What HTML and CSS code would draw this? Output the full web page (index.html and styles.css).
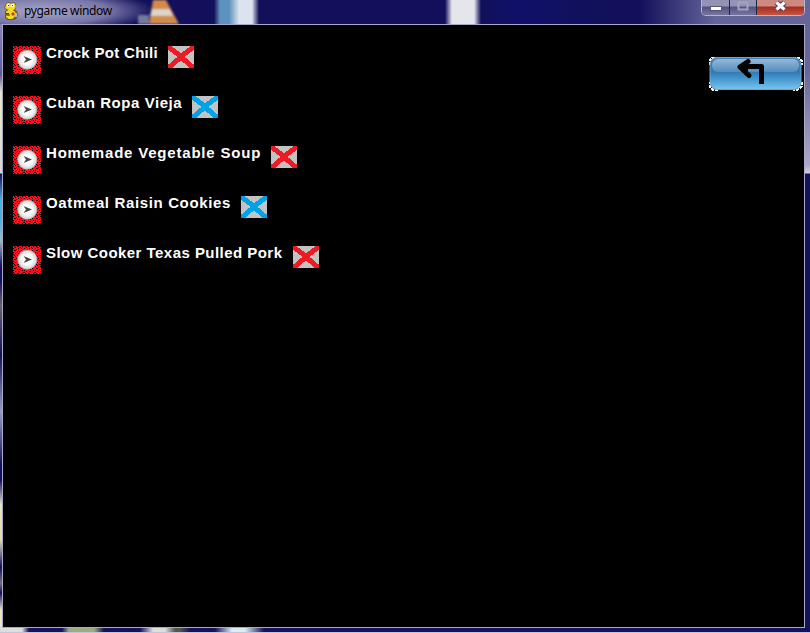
FILE: index.html
```
<!DOCTYPE html>
<html lang="en">
<head>
<meta charset="utf-8">
<title>pygame window</title>
<link rel="stylesheet" href="styles.css">
</head>
<body>
<svg class="defs" width="0" height="0" aria-hidden="true">
  <defs>
    <pattern id="speckle" width="11" height="9" patternUnits="userSpaceOnUse">
      <rect width="11" height="9" fill="#fa0d18"/>
      <path fill="#160003" d="M1 0h1v1h-1zM4 0h2v1h-2zM9 0h1v1h-1zM2 1h1v1h-1zM7 1h1v1h-1zM0 2h1v1h-1zM5 2h1v1h-1zM8 2h1v1h-1zM3 3h1v1h-1zM1 4h2v1h-2zM8 4h1v1h-1zM4 5h1v1h-1zM6 5h1v1h-1zM0 6h1v1h-1zM9 6h1v1h-1zM2 7h1v1h-1zM5 7h2v1h-2zM0 8h1v1h-1zM10 8h1v1h-1z"/>
    </pattern>
    <radialGradient id="disc"><stop offset=".5" stop-color="#fff"/><stop offset="1" stop-color="#ccd0cf"/></radialGradient>
    <symbol id="play" viewBox="0 0 28 28">
      <rect width="28" height="28" fill="url(#speckle)" shape-rendering="crispEdges"/>
      <circle cx="14.300" cy="13.600" r="9.700" fill="url(#disc)" stroke="#aaa" stroke-width=".6"/>
      <path d="M10.500 10l8.500 3.500-8.500 3.500 2.500-3.500z" fill="#484848"/>
    </symbol>
    <symbol id="cross" viewBox="0 0 26 22">
      <rect width="26" height="22" fill="#c3c3c3"/>
      <path d="M1 1.500l7.500 5.500 5 4.500 10.500 9M25 1.500L17.500 7 9.500 14 2 20.500" fill="none" stroke="currentColor" stroke-width="5" stroke-linecap="square" shape-rendering="crispEdges"/>
    </symbol>
  </defs>
</svg>
<div class="window">
  <header class="titlebar">
    <svg class="logo" width="16" height="18" viewBox="0 0 16 18">
      <path d="M3 1l3-1 2 1 3-1 2 2v4l-1 2 2 1 1 3-1 4-3 2H5l-3-2V9l2-1-3-2z" fill="#6b5a1c"/>
      <path d="M3.500 1.500L6 .8l2 1 3-1L12.500 3v3L10 8.500l2.500 1.500-1 5-2 2H5.500L3 15V13.500l3 .5 1.500-1.500L3 12V9.500l2.500-1.500L2 6z" fill="#f5dc22"/>
      <path d="M4 2h2v3H4zM8 2h3v3H8z" fill="#fff"/>
      <path d="M5 3h1v1H5zM9 3h1v1H9zM3 11h3v1H3z" fill="#444"/>
      <path d="M10 10l2 2-2 2-2-2z" fill="#c33a40"/><path d="M12 11h2v4h-2z" fill="#bbb"/>
    </svg>
    <h1 class="title">pygame window</h1>
    <svg class="cone" width="48" height="24" viewBox="0 0 48 24"><path d="M15 0h13l13 24H11z" fill="#d28b4c"/><path d="M14 9h18l3 7H12z" fill="#ddd3cc"/><path d="M0 15h11v9H0z" fill="#737b9c"/></svg>
    <div class="controls">
      <span class="control minimize"><svg width="29" height="16" viewBox="0 0 29 16"><rect x="8.500" y="6.500" width="11" height="4" fill="#fff" stroke="#555575"/></svg></span>
      <span class="control maximize"><svg width="26" height="16" viewBox="0 0 26 16"><path d="M8.500 2.500h9v7h-9z" fill="none" stroke="#a5a5bf" stroke-width="2"/></svg></span>
      <span class="control close"><svg width="47" height="16" viewBox="0 0 47 16"><path d="M19.500 2.500l8 7m0-7l-8 7" stroke="#554557" stroke-width="5.500"/><path d="M19.500 2.500l8 7m0-7l-8 7" stroke="#fff" stroke-width="3"/></svg></span>
    </div>
  </header>
  <main class="client">
    <ul class="recipes">
      <li class="recipe"><svg class="play"><use href="#play"/></svg><span class="name chili">Crock Pot Chili</span><svg class="cross red"><use href="#cross"/></svg></li>
      <li class="recipe"><svg class="play"><use href="#play"/></svg><span class="name ropa">Cuban Ropa Vieja</span><svg class="cross blue"><use href="#cross"/></svg></li>
      <li class="recipe"><svg class="play"><use href="#play"/></svg><span class="name soup">Homemade Vegetable Soup</span><svg class="cross red"><use href="#cross"/></svg></li>
      <li class="recipe"><svg class="play"><use href="#play"/></svg><span class="name cookies">Oatmeal Raisin Cookies</span><svg class="cross blue"><use href="#cross"/></svg></li>
      <li class="recipe"><svg class="play"><use href="#play"/></svg><span class="name pork">Slow Cooker Texas Pulled Pork</span><svg class="cross red"><use href="#cross"/></svg></li>
    </ul>
    <svg class="back" width="95" height="35" viewBox="0 0 95 35">
      <defs><linearGradient id="btn" x2="0" y2="1"><stop stop-color="#4a83b5"/><stop offset=".45" stop-color="#3279b2"/><stop offset=".6" stop-color="#3d8ec8"/><stop offset="1" stop-color="#78c5ef"/></linearGradient>
      <linearGradient id="gloss" x2="0" y2="1"><stop stop-color="#a9c5df"/><stop offset="1" stop-color="#5a93c2"/></linearGradient></defs>
      <path d="M1.500 9V4.500L4.500 1.500H10M85 1.500h5l3.500 3V9M93.500 26v4.500l-3.500 3h-5M10 33.500H4.500l-3-3V26" fill="none" stroke="#fff" stroke-width="2" stroke-dasharray="3 1" shape-rendering="crispEdges"/>
      <rect x="2" y="1.500" width="91" height="32" rx="7" fill="url(#btn)" stroke="#6aa6cf"/>
      <rect x="4" y="3" width="87" height="13" rx="6" fill="url(#gloss)" opacity=".8"/>
      <path d="M53.500 28V10.500H34" fill="none" stroke="#000" stroke-width="5" stroke-linejoin="round"/>
      <path d="M40 5.500L32 11l9 8.500" fill="#000" fill-opacity="0" stroke="#000" stroke-width="5" stroke-linecap="round" stroke-linejoin="round"/>
      <path d="M32 11l8-5v11z"/>
    </svg>
  </main>
</div>
</body>
</html>
```
FILE: styles.css
```
* { box-sizing: border-box; }
body { margin: 0; background: #12105a; overflow: hidden; }
.defs { position: absolute; }
.window {
  width: 810px; height: 633px;
  display: grid; grid-template-rows: 24px 604px; align-content: start;
  padding: 0 5px 5px 2px;
  border-bottom: 1px solid #c5c4de;
  background:
    linear-gradient(90deg, #ddd 22px, #14125a 29px 62px, #9bac84 69px 94px, #14125a 104px 140px, #ddd 153px 165px, #555 175px 180px, #14125a 190px 215px, #dceaf2 232px 245px, #14125a 264px) 0 100% / 810px 6px no-repeat,
    linear-gradient(#65659a 0, #66669a 70px, #aaa8c8 165px, #d0cee0 173px, #14125a 174px) 100% 0 / 6px 100% no-repeat,
    linear-gradient(#9c9bc5 0, #5c5a9a 75px, #e8e5c8 92px, #e8e5c8 122px, #d5d5e0 173px, #14125a 174px, #45b3dc 200px, #45b3dc 220px, #a5b8cf 240px, #14125a 266px, #14125a 280px, #6b6268 305px, #14125a 355px, #8f9fc0 411px, #14125a 465px, #14125a 480px, #ebe4c8 505px, #e0d9b8 540px, #14125a 567px, #777078 583px, #14125a 593px, #ebe4c8 610px) 0 0 / 3px 100% no-repeat,
    #12105a;
}
.titlebar {
  display: flex; align-items: flex-start; margin: 0 0 0 -2px; width: 810px; height: 24px; padding-left: 3px;
  background:
    radial-gradient(ellipse 115px 22px at 40px 11px, #a7a5ca 0, #9290bccc 60%, transparent),
    linear-gradient(90deg, transparent, #5e91bd 6px 15px, #dbe3ef 25px 38px, transparent 45px) 214px 0 / 46px 24px no-repeat,
    linear-gradient(90deg, transparent, #e4e6ec 7px 29px, transparent 36px) 445px 0 / 37px 24px no-repeat,
    linear-gradient(90deg, transparent, #65659a 75px) 640px 0 / 170px 24px no-repeat,
    linear-gradient(90deg, #12105a 480px, #10106a 520px, #12105a 600px);
}
.logo { margin-top: 2px; }
.title { width: 92px; margin: 2px 0 0 5px; font: 400 12px/17px "Noto Sans", sans-serif; letter-spacing: -.34px; color: #000; white-space: nowrap; }
.cone { margin-left: 22px; filter: blur(1.2px); }
.controls {
  display: flex; width: 104px; height: 16px; margin: 0 5px 0 auto;
  border: 1px solid #b5b4ce; border-top: 0; border-radius: 0 0 5px 5px; overflow: hidden;
}
.control { height: 15px; background: linear-gradient(#9492b5 0 6px, #54527f 7px, #7775a0); border-right: 1px solid #25243f; }
.control svg { display: block; }
.minimize { width: 28px; }
.maximize { width: 27px; }
.close { width: 47px; border: 0; background: linear-gradient(#cb8980 0 6px, #a72b1d 7px, #c55642); }
.client { position: relative; width: 803px; height: 604px; background: #000; border: 1px solid #aaa9c8; padding: 20px 0 0 10px; }
.recipes { list-style: none; margin: 0; padding: 0; }
.recipe { display: flex; align-items: flex-start; height: 50px; }
.play { width: 28px; height: 28px; margin: 1px 5px 0 0; }
.name { height: 18px; margin: -1px 10px 0 0; font: 700 15px/18px "Liberation Sans", Arial, sans-serif; color: #fff; white-space: nowrap; }
.chili { width: 112px; letter-spacing: .3px; }
.ropa { width: 136px; letter-spacing: .56px; }
.soup { width: 215px; letter-spacing: .8px; }
.cookies { width: 185px; letter-spacing: .64px; }
.pork { width: 237px; letter-spacing: .46px; }
.cross { width: 26px; height: 22px; margin-top: 1px; }
.red { color: #ed1c24; }
.blue { color: #00a2e8; }
.back { position: absolute; left: 705px; top: 31px; }
```
